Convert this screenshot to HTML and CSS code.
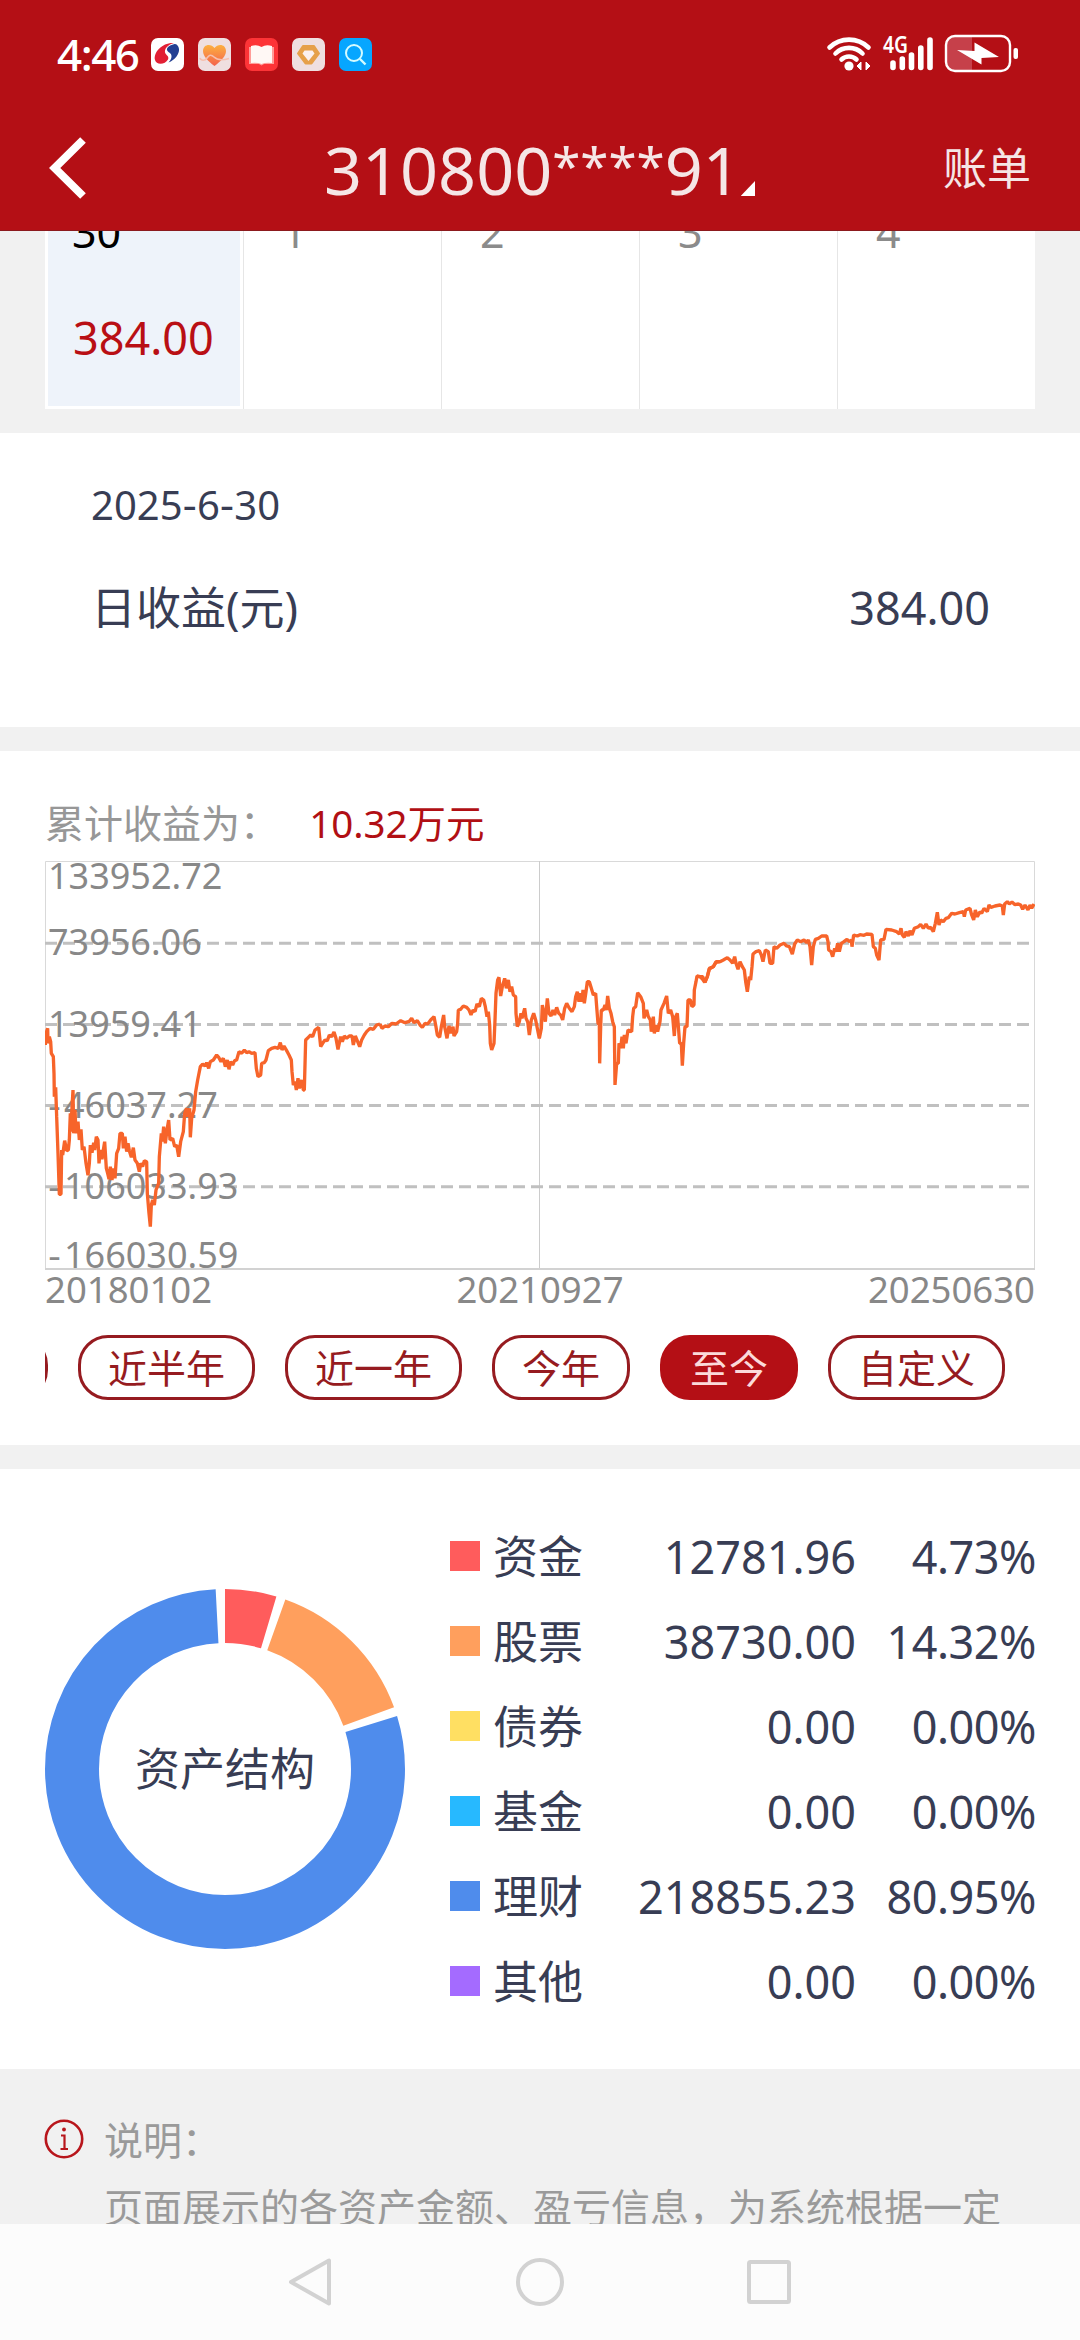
FILE: index.html
```html
<!DOCTYPE html>
<html lang="zh-CN">
<head>
  <meta charset="UTF-8">
  <title>账单</title>
  <link rel="stylesheet" href="styles.css">
</head>
<body>
  <header>
    <div class="status-bar">
      <span class="time">4:46</span>
      <div class="app-icons">
        <svg width="33" height="33" viewBox="0 0 33 33">
          <rect width="33" height="33" rx="7" fill="#fff"/>
          <path d="M23 5C12 4 2 14 4 22c1 5 10 5 13-.500 2-4-4-4.500-3-9C15 8.500 19 6 23 5z" fill="#e21f34"/>
          <path d="M23.500 6c-4 1-8 3-7.500 6 .500 2.500 5 2.500 4.500 7-.300 2-1.500 4-3 5.500C24 22 28.500 16 28 11c-.300-3-2-5-4.500-5z" fill="#233f92"/>
        </svg>
        <svg width="33" height="33" viewBox="0 0 33 33">
          <defs>
            <linearGradient id="heart" x1="0" y1="0" x2="0" y2="1">
              <stop offset="0" stop-color="#fcb040"/>
              <stop offset="1" stop-color="#f4624c"/>
            </linearGradient>
          </defs>
          <rect width="33" height="33" rx="7" fill="#efdfe0"/>
          <path d="M16.500 28C10 23 5 18 5 13c0-7 8-8 11.500-3C20 5 28 6 28 13c0 5-5 10-11.500 15z" fill="url(#heart)"/>
          <path d="M2 20c1 3 5 3 7 0s4-4 7-1 8 3.500 15 1.500" fill="none" stroke="#f6bfae" stroke-width="1.600"/>
        </svg>
        <svg width="33" height="33" viewBox="0 0 33 33">
          <rect width="33" height="33" rx="7" fill="#fd3437"/>
          <path d="M4 9h25v17H19l-2.500 1.500L14 26H4z" fill="#ff9c98"/>
          <path d="M6 8q6-2 10.500 1Q21 6 27 8v17q-6-1-10.500 1Q12 24 6 25z" fill="#fff8f5"/>
        </svg>
        <svg width="33" height="33" viewBox="0 0 33 33">
          <rect width="33" height="33" rx="7" fill="#efdfe0"/>
          <path d="M11 8h11l5 7.500-7.500 10h-6L6 15.500z" fill="#e6a04a" stroke="#e6a04a" stroke-width="2" stroke-linejoin="round"/>
          <path d="M12.500 12.500h8l2 3-6 7.500-6-7.500z" fill="#fbf0f0"/>
        </svg>
        <svg width="33" height="33" viewBox="0 0 33 33">
          <rect width="33" height="33" rx="7" fill="#06a6ff"/>
          <circle cx="15" cy="15" r="8" fill="none" stroke="#d4fbff" stroke-width="2"/>
          <path d="M21 21l5.500 5.500" stroke="#d4fbff" stroke-width="2.400"/>
        </svg>
      </div>
      <svg class="signals" width="194" height="40" viewBox="825 34 194 40">
        <g fill="none" stroke="#fff" stroke-width="4.600" stroke-linecap="round">
          <path d="M829.500 47.500a28 28 0 0 1 39 0"/>
          <path d="M835.500 53.500a19 19 0 0 1 27 0"/>
          <path d="M841.500 59.500a11 11 0 0 1 15 0"/>
        </g>
        <circle cx="849" cy="66" r="4.600" fill="#fff"/>
        <path d="M861 62v8l-4-4zM866 62v8l4-4z" fill="#fff" stroke="#fff"/>
        <text class="net" x="883" y="53" textLength="25" lengthAdjust="spacingAndGlyphs">4G</text>
        <g stroke="#fff" stroke-width="5.600" stroke-linecap="round">
          <path d="M893 63v4.500M902.300 59v8.500M911.500 55v12.500M920.800 48v19.500M930 40v27.500"/>
        </g>
        <path d="M947 44q0-7 8-7h17v34h-17q-8 0-8-7z" fill="#c6404a"/>
        <rect x="946" y="36" width="64" height="35" rx="9" fill="none" stroke="#fff" stroke-width="2.400"/>
        <rect x="1013.500" y="48" width="4.500" height="11" rx="2" fill="#fff"/>
        <path d="M957 50l17.500 1v-8.500L999 57l-17.500 1v6.500z" fill="#fff"/>
      </svg>
    </div>
    <div class="nav-bar">
      <svg class="back" width="40" height="64" viewBox="0 0 40 64">
        <path d="M35 4L6.700 32 35 60" fill="none" stroke="#fff" stroke-width="8"/>
      </svg>
      <div class="account">310800<span class="stars">****</span>91<i class="arrow"></i></div>
      <span class="bill">账单</span>
    </div>
  </header>

  <main>
    <div class="calendar">
      <div class="day active"><span class="num">30</span><span class="profit">384.00</span></div>
      <div class="day"><span class="num">1</span></div>
      <div class="day"><span class="num">2</span></div>
      <div class="day"><span class="num">3</span></div>
      <div class="day"><span class="num">4</span></div>
    </div>

    <section class="daily">
      <div class="date">2025<b>-</b>6<b>-</b>30</div>
      <div class="daily-row"><span>日收益(元)</span><span>384.00</span></div>
    </section>

    <section class="trend">
      <div class="total">累计收益为： <span>10.32万元</span></div>
      <svg class="chart" width="990" height="409" viewBox="0 0 990 409">
        <g class="frame">
          <path d="M.500 408V.500h989V408"/>
          <path class="mid" d="M494.500 0v408"/>
          <path class="axis" d="M0 408h990"/>
        </g>
        <path class="grid" d="M0 82.300h990M0 163.500h990M0 244.500h990M0 325.700h990"/>
        <g class="labels">
          <text x="3" y="28">133952.72</text>
          <text x="3" y="94">73956.06</text>
          <text x="3" y="176">13959.41</text>
          <text x="3" y="257"><tspan class="minus">-</tspan>46037.27</text>
          <text x="3" y="338"><tspan class="minus">-</tspan>106033.93</text>
          <text x="3" y="407"><tspan class="minus">-</tspan>166030.59</text>
        </g>
        <g class="line">
          <polyline transform="translate(-15 -81) scale(.33333)" points="46,795 48,760 53,745 54,790 58,770 62,785 64,820 70,830 72,880 73,950 77,922 80,1010 84,1120 88,1243 93,1243 95,1110 98,1125 104,1082 110,1112 115,1110 118,1080 121,1000 122,1055 129,930 131,1060 135,990 138,1060 144,1025 148,1080 153,1048 157,1110 162,1100 168,1150 174,1186 178,1150 181,1095 186,1118 191,1088 194,1110 199,1070 204,1080 207,1150 211,1110 216,1138 220,1110 224,1085 229,1165 233,1180 237,1197 241,1160 246,1200 250,1165 255,1195 260,1120 266,1105 270,1060 277,1060 280,1105 285,1070 290,1115 294,1090 298,1112 304,1132 310,1103 315,1140 322,1150 328,1175 332,1150 338,1160 343,1142 350,1145 352,1240 357,1300 361,1340 364,1275 368,1260 373,1275 378,1230 386,1210 388,1130 394,1060 397,1085 401,1040 406,1090 411,1050 416,1020 420,1080 428,1075 434,1100 440,1095 446,1130 452,1085 460,1055 464,1000 470,985 473,1010 479,985 481,1072 485,1015 492,990 497,935 503,900 511,860 518,852 525,858 530,848 536,865 541,845 550,840 560,825 566,832 573,845 580,835 586,860 592,840 597,868 602,845 608,855 614,842 620,840 627,815 635,820 643,810 650,818 657,815 665,820 675,818 679,865 684,890 692,885 695,850 703,848 708,840 715,812 725,805 735,802 745,805 751,788 756,810 762,798 770,812 777,825 784,840 786,875 790,915 795,905 799,930 804,895 808,925 815,900 820,930 823,930 827,780 835,772 842,765 848,770 855,750 866,742 872,800 878,790 885,780 892,782 898,765 905,770 912,756 918,775 924,808 932,770 937,785 943,768 950,775 958,768 966,768 970,795 976,768 983,785 989,800 995,780 1003,765 1010,755 1020,745 1030,748 1040,735 1050,732"/>
          <polyline transform="translate(325 -81) scale(.33333)" points="30,732 36,745 45,738 55,740 66,730 78,732 92,722 105,728 118,724 125,715 132,728 142,722 150,735 157,742 165,730 173,732 182,720 192,710 197,735 202,765 209,772 214,740 221,705 224,740 231,775 237,738 243,760 249,740 252,768 260,755 263,730 265,690 272,688 280,678 290,682 297,690 303,705 309,690 315,695 321,672 328,680 334,655 341,660 346,680 351,710 355,695 359,735 361,790 365,810 372,790 375,720 378,640 383,600 387,592 392,648 397,620 404,595 409,625 415,600 420,635 425,620 430,645 437,650 438,700 442,740 448,725 453,700 456,715 464,685 468,715 473,725 478,765 484,720 491,700 497,720 502,745 508,775 514,745 517,675 522,700 526,725 532,655 537,700 543,708 549,690 554,705 560,682 566,700 572,705 578,720 584,685 590,670 598,685 606,695 613,680 617,650 622,635 627,665 631,640 636,665 639,630 643,670 648,635 652,605 658,605 664,625 670,645 677,640 680,680 684,730 688,735 689,850 692,740 694,690 700,690 705,675 709,690 713,648 718,685 723,700 728,725 733,740 735,915 740,850 745,850 747,790 752,805 756,770 760,805 763,765 768,790 774,750 785,755 788,710 791,685 797,680 803,638 812,650 820,670 822,715 830,690 835,710 841,720 844,755 850,710 853,760 858,735 863,755 870,725 873,690 882,670 890,648 895,700 902,690 908,710 913,768 917,710 922,700 929,790 934,790 937,857 941,790 945,740 951,740 954,660 961,660 966,680 972,675 973,630 978,605 981,588 990,590 998,590 1005,607 1012,590 1018,565 1030,560 1038,545 1050,545"/>
          <polyline transform="translate(655 -81) scale(.33333)" points="0,590 8,598 14,607 22,590 28,567 40,560 48,547 60,545 70,540 82,533 90,540 98,550 104,530 108,550 114,568 120,545 127,560 133,570 137,605 142,635 148,590 152,600 156,560 159,522 168,515 178,512 184,525 189,545 196,510 205,515 210,550 218,550 222,500 230,505 240,495 252,490 260,498 268,500 277,522 284,492 292,480 302,485 312,480 320,488 325,480 330,500 335,555 340,500 346,478 355,475 365,468 380,468 384,485 386,510 393,515 398,530 404,505 408,515 413,490 418,515 424,490 432,485 441,478 448,485 454,480 456,500 461,465 472,468 480,464 492,466 500,462 516,463 520,500 526,505 530,525 537,540 542,480 552,478 558,448 575,450 590,455 598,462 603,445 607,465 613,472 618,455 625,468 630,452 636,465 643,445 655,440 662,433 670,445 678,432 685,445 692,442 700,455 706,430 712,397 717,435 722,420 730,425 738,415 745,413 755,400 765,402 778,398 790,395 793,410 797,390 810,385 815,405 821,420 826,390 832,410 840,395 845,400 852,385 862,395 867,375 873,382 885,378 900,375 907,378 910,405 914,372 922,365 928,372 936,366 945,374 955,372 962,375 968,388 975,375 984,390 990,375 995,385 1002,372"/>
        </g>
      </svg>
      <div class="x-axis"><span>20180102</span><span>20210927</span><span>20250630</span></div>
      <div class="ranges">
        <button class="cut"></button>
        <button>近半年</button>
        <button>近一年</button>
        <button>今年</button>
        <button class="on">至今</button>
        <button>自定义</button>
      </div>
    </section>

    <section class="assets">
      <svg class="donut" width="360" height="360" viewBox="0 0 360 360">
        <g fill="none" stroke-width="54" transform="rotate(-90 180 180)">
          <circle cx="180" cy="180" r="153" pathLength="360" stroke="#ff5c5c" stroke-dasharray="16.600 343.400"/>
          <circle cx="180" cy="180" r="153" pathLength="360" stroke="#ff9f5d" stroke-dasharray="50.300 309.700" stroke-dashoffset="-19.600"/>
          <circle cx="180" cy="180" r="153" pathLength="360" stroke="#4f8cec" stroke-dasharray="284.100 75.900" stroke-dashoffset="-72.900"/>
        </g>
        <text x="180" y="197">资产结构</text>
      </svg>
      <div class="legend">
        <i class="fund"></i><span>资金</span><span>12781.96</span><span class="pct">4.73%</span>
        <i class="stock"></i><span>股票</span><span>38730.00</span><span class="pct">14.32%</span>
        <i class="bond"></i><span>债券</span><span>0.00</span><span class="pct">0.00%</span>
        <i class="mutual"></i><span>基金</span><span>0.00</span><span class="pct">0.00%</span>
        <i class="wealth"></i><span>理财</span><span>218855.23</span><span class="pct">80.95%</span>
        <i class="other"></i><span>其他</span><span>0.00</span><span class="pct">0.00%</span>
      </div>
    </section>

    <div class="note">
      <svg width="40" height="40" viewBox="0 0 40 40">
        <circle cx="20" cy="20" r="18.200" fill="none" stroke="#b8161c" stroke-width="2.600"/>
        <circle cx="20" cy="10.500" r="1.900" fill="#b8161c"/>
        <path d="M17 16.500h3.500V30M16.500 30h7.500" fill="none" stroke="#b8161c" stroke-width="2.200"/>
      </svg>
      <div>
        <p>说明：</p>
        <p>页面展示的各资产金额、盈亏信息，为系统根据一定</p>
      </div>
    </div>
  </main>

  <footer>
    <svg width="50" height="50" viewBox="0 0 50 50"><path d="M43 3.500v43L5 25z"/></svg>
    <svg width="50" height="50" viewBox="0 0 50 50"><circle cx="25" cy="25" r="22"/></svg>
    <svg width="50" height="50" viewBox="0 0 50 50"><rect x="5" y="5" width="40" height="40" rx="1.500"/></svg>
  </footer>
</body>
</html>
```
FILE: styles.css
```css
* {
  box-sizing: border-box;
}
body {
  margin: 0;
  width: 1080px;
  height: 2340px;
  overflow: hidden;
  display: flex;
  flex-direction: column;
  font-family: "Noto Sans", "Noto Sans CJK SC", sans-serif;
  background-color: #f1f1f1;
  color: #383d54;
  font-size: 45px;
}
svg {
  display: block;
  flex: none;
}
header {
  height: 231px;
  flex: none;
  background-color: #b40f15;
  border-bottom: 1px solid #8c1a1e;
  color: #f5e6e6;
}
.status-bar {
  height: 108px;
  padding: 0 61px 0 57px;
  display: flex;
  align-items: center;
}
.time {
  width: 94px;
  font-size: 44px;
  font-weight: 500;
  line-height: 60px;
  letter-spacing: -1.5px;
  color: #fff;
}
.app-icons {
  display: flex;
  gap: 14px;
}
.signals {
  margin-left: auto;
}
.net {
  font-size: 24px;
  font-weight: 600;
  fill: #fff;
}
.nav-bar {
  height: 120px;
  padding: 0 49px 0 48px;
  display: flex;
  align-items: center;
}
.account {
  width: 431px;
  margin: 2px auto 0 236px;
  display: flex;
  font-size: 66.5px;
  line-height: 90px;
}
.stars {
  font-size: 51px;
  margin-top: -4px;
}
.arrow {
  width: 15px;
  height: 15px;
  margin: 57px 0 0 auto;
  background-color: #fff;
  clip-path: polygon(100% 0, 100% 100%, 0 100%);
}
.bill {
  font-size: 44px;
  line-height: 60px;
}
main {
  height: 1993px;
  flex: none;
  overflow: hidden;
}
.calendar {
  height: 178px;
  margin: 0 45px 24px;
  display: flex;
  background-color: #fff;
}
.day {
  width: 198px;
  padding-left: 38px;
  border-left: 1px solid #e6e6e6;
  color: #8b8b8b;
}
.day span {
  display: block;
}
.day .num {
  height: 66px;
  font-size: 43px;
  line-height: 50px;
  margin-top: -24px;
}
.day.active {
  border: 3px solid #fff;
  border-top: 0;
  background-color: #eef3fa;
  padding-left: 24px;
  color: #000;
}
.day .profit {
  line-height: 60px;
  margin-top: 35px;
  color: #b90f14;
  margin-left: 1px;
}
section {
  background-color: #fff;
  margin-bottom: 24px;
}
.daily {
  height: 294px;
  padding: 42px 90px 0 91px;
}
.date {
  font-size: 40px;
  line-height: 60px;
}
/* wider hyphen than the one in Noto Sans */
.date b {
  font-family: "DejaVu Sans", sans-serif;
  font-weight: 400;
}
.daily-row {
  margin-top: 42px;
  display: flex;
  justify-content: space-between;
  line-height: 60px;
}
.trend {
  height: 694px;
  padding: 47px 45px 0;
}
.total {
  font-size: 39px;
  line-height: 50px;
  color: #979797;
  margin-bottom: 13px;
}
.total span {
  margin-left: 20px;
  font-size: 38.5px;
  color: #b10f14;
}
.frame path {
  fill: none;
  stroke: #d9d9d9;
}
.frame .mid {
  stroke: #cccccc;
}
.frame .axis {
  stroke: #d2d2d2;
  stroke-width: 2;
}
.grid {
  fill: none;
  stroke: #c0c0c0;
  stroke-width: 3;
  stroke-dasharray: 12 6;
}
.labels {
  font-size: 36px;
  fill: #888;
}
.minus {
  font-family: "DejaVu Sans", sans-serif;
  letter-spacing: 3px;
}
.line {
  fill: none;
  stroke: #f7642a;
  stroke-width: 10;
  stroke-linejoin: bevel;
}
.x-axis {
  display: flex;
  justify-content: space-between;
  font-size: 36.5px;
  line-height: 38px;
  color: #888;
}
.ranges {
  margin-top: 27px;
  padding-right: 30px;
  display: flex;
  justify-content: flex-end;
  gap: 30px;
  overflow: hidden;
}
button {
  flex: none;
  height: 65px;
  padding: 0 27px;
  border: 3px solid #961b20;
  border-radius: 30px;
  background-color: #fff;
  color: #961b20;
  font: 39px/56px "Noto Sans", "Noto Sans CJK SC", sans-serif;
}
button.cut {
  width: 120px;
}
button.on {
  background-color: #b40f15;
  border-color: #b40f15;
  color: #fbdada;
}
.assets {
  height: 600px;
  margin-bottom: 0;
  padding: 45px 44px 0 45px;
  display: flex;
  gap: 45px;
}
.donut {
  margin-top: 75px;
}
.donut text {
  text-anchor: middle;
  fill: #383d54;
}
.legend {
  flex: 1;
  display: grid;
  grid-template-columns: 43px 100px 1fr 180px;
  grid-auto-rows: 85px;
  line-height: 86px;
  text-align: right;
  white-space: nowrap;
}
.legend i {
  width: 30px;
  height: 30px;
  margin-top: 27px;
}
.legend i + span {
  text-align: left;
}
.legend .pct {
  letter-spacing: -.5px;
}
.fund { background-color: #ff5c5c; }
.stock { background-color: #ff9f5d; }
.bond { background-color: #ffdf62; }
.mutual { background-color: #27b9ff; }
.wealth { background-color: #4f8cec; }
.other { background-color: #a46bff; }
.note {
  padding: 37px 44px 0;
  display: flex;
  gap: 20px;
  font-size: 39px;
  line-height: 67px;
  color: #9a9a9a;
}
.note svg {
  margin-top: 13px;
}
.note p {
  margin: 0;
  white-space: nowrap;
}
footer {
  height: 116px;
  display: flex;
  justify-content: center;
  align-items: center;
  gap: 179px;
  background-color: #fcfcfc;
}
footer svg {
  fill: none;
  stroke: #d2d2d2;
  stroke-width: 4;
  stroke-linejoin: round;
}
```
